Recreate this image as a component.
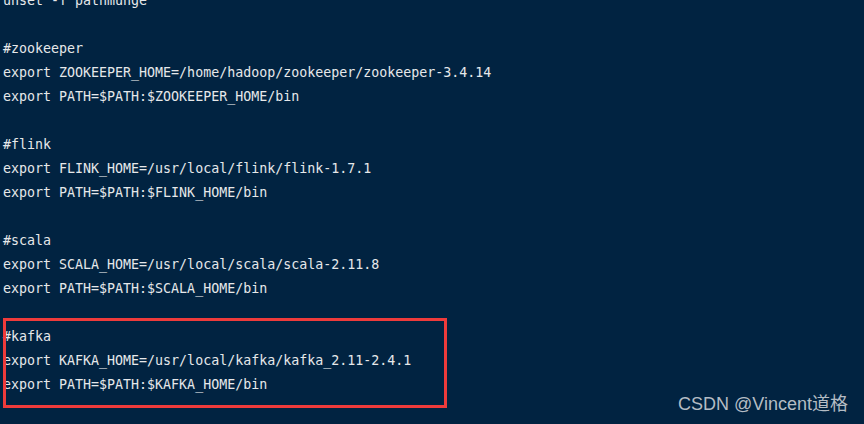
import React from 'react';

const lines: string[] = [
    'unset -f pathmunge',
    '',
    '#zookeeper',
    'export ZOOKEEPER_HOME=/home/hadoop/zookeeper/zookeeper-3.4.14',
    'export PATH=$PATH:$ZOOKEEPER_HOME/bin',
    '',
    '#flink',
    'export FLINK_HOME=/usr/local/flink/flink-1.7.1',
    'export PATH=$PATH:$FLINK_HOME/bin',
    '',
    '#scala',
    'export SCALA_HOME=/usr/local/scala/scala-2.11.8',
    'export PATH=$PATH:$SCALA_HOME/bin',
    '',
];

const kafka: string[] = [
    '#kafka',
    'export KAFKA_HOME=/usr/local/kafka/kafka_2.11-2.4.1',
    'export PATH=$PATH:$KAFKA_HOME/bin',
];

const Line: React.FC<{ text: string }> = ({ text }) => (
    <div className="h-[24px] whitespace-pre">{text || ' '}</div>
);

export default function App() {
    return (
        <div className="relative w-[864px] h-[424px] overflow-hidden bg-[#012341]">
            <div
                className="mt-[-11px] pl-[3px] text-[13.3px] leading-[24px] text-[#e6e8ea]"
                style={{ fontFamily: '"DejaVu Sans Mono", "Liberation Mono", monospace' }}
            >
                {lines.map((l, i) => (
                    <Line key={i} text={l} />
                ))}
                <div className="relative">
                    {kafka.map((l, i) => (
                        <Line key={i} text={l} />
                    ))}
                    <div className="absolute left-0 top-[-7px] w-[444px] h-[90px] border-[3px] border-[#ee3b3b]"></div>
                </div>
            </div>
            <div
                className="absolute right-[16px] bottom-[9px] text-[18px] leading-[22px] text-[#b4bcc4]"
                style={{ fontFamily: '"Liberation Sans", "Noto Sans CJK SC", sans-serif' }}
            >
                CSDN @Vincent道格
            </div>
        </div>
    );
}
